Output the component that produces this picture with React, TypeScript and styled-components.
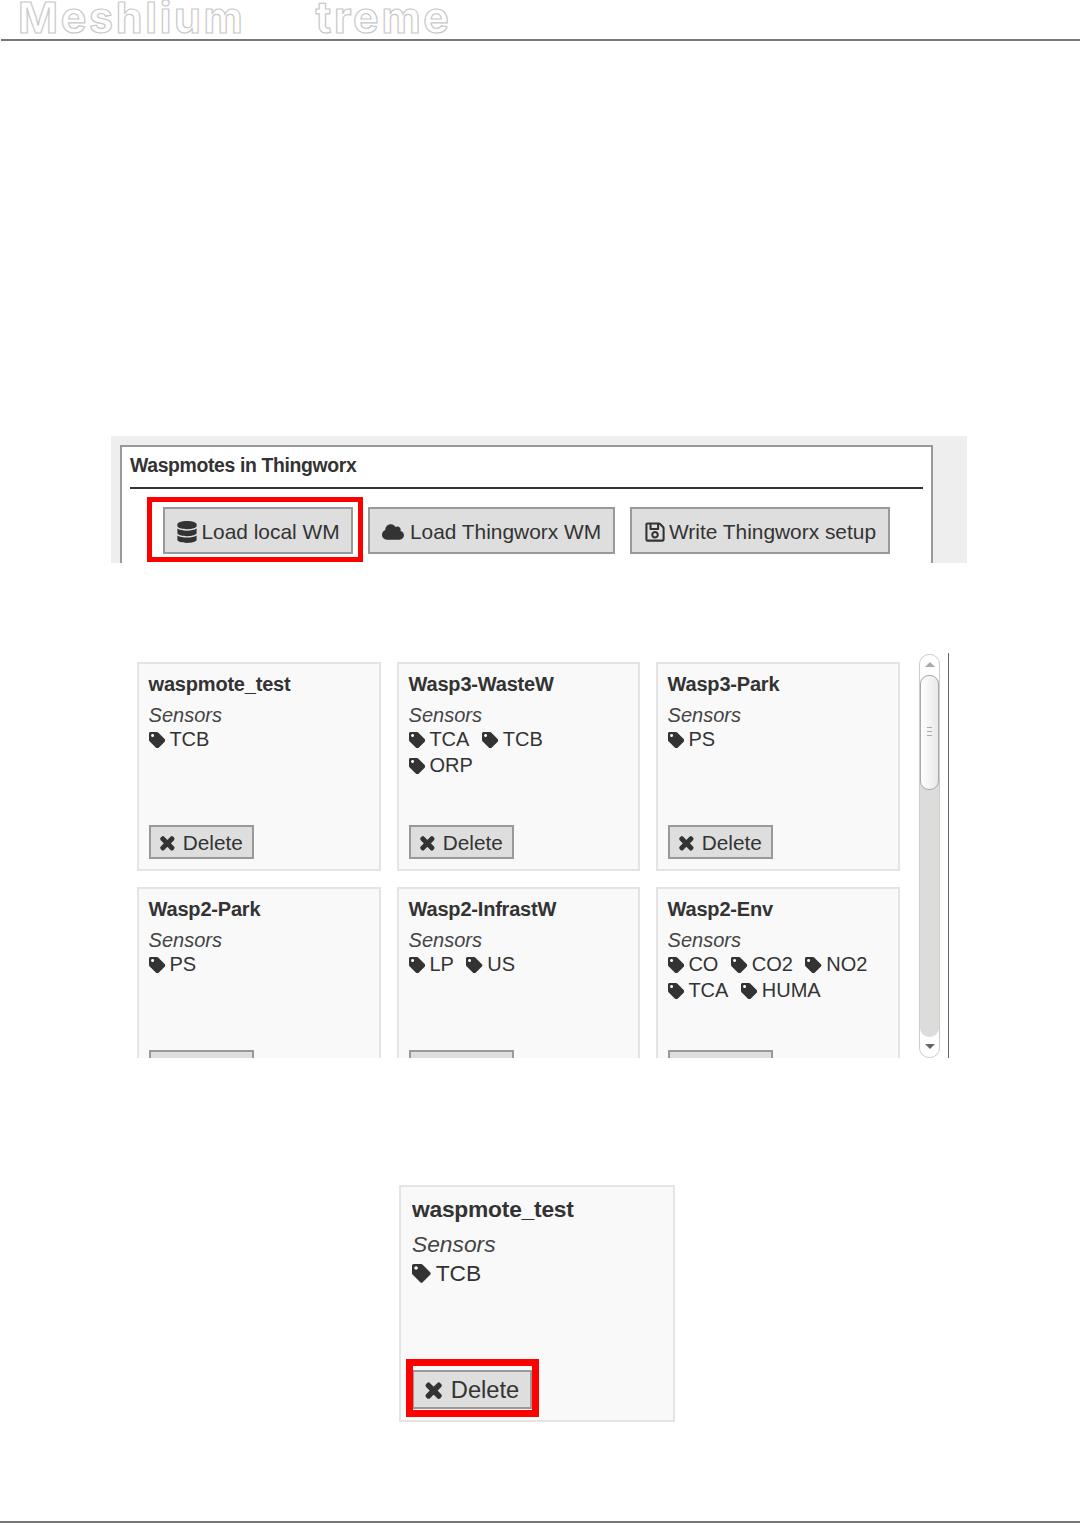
import React, { FC } from 'react';
import styled, { createGlobalStyle } from 'styled-components';
import { FaCloud, FaDatabase, FaRegSave, FaTag, FaTimes } from 'react-icons/fa';

const GlobalStyle = createGlobalStyle`
    html, body {
        margin: 0;
        background: #fff;
        font-family: 'Liberation Sans', Arial, sans-serif;
        color: #333;
    }
`;

const Page = styled.div`
    width: 1080px;
    height: 1523px;
    overflow: hidden;
    display: flex;
    flex-direction: column;
    align-items: flex-start;
`;

const Header = styled.header`
    width: 1079px;
    margin-left: 1px;
    height: 41px;
    box-sizing: border-box;
    border-bottom: 2px solid #777;
    padding-left: 17px;
    display: flex;
    gap: 70px;
    overflow: hidden;
`;

const Logo = styled.span`
    font-family: Inter, sans-serif;
    font-size: 43px;
    font-weight: 700;
    line-height: 34px;
    letter-spacing: 2.7px;
    color: #fff;
    -webkit-text-stroke: 1.2px #c8c8c8;
`;

const PanelShot = styled.section`
    width: 856px;
    height: 127px;
    margin: 395px 0 0 111px;
    padding: 9px 34px 0 9px;
    box-sizing: border-box;
    background: #eee;
    overflow: hidden;
`;

const Panel = styled.div`
    height: 130px;
    box-sizing: border-box;
    padding: 0 8px;
    background: #fff;
    border: 2px solid #999;
`;

const PanelTitle = styled.h2`
    margin: 0;
    height: 42px;
    box-sizing: border-box;
    line-height: 36px;
    font-size: 19.4px;
    font-weight: bold;
    letter-spacing: -0.35px;
    border-bottom: 2px solid #333;
`;

const Toolbar = styled.div`
    display: flex;
    gap: 15px;
    padding: 18px 0 0 33px;
`;

const Highlight = styled.span<{ $inset: string; $thick: number }>`
    position: relative;
    display: inline-flex;
    &::after {
        content: '';
        position: absolute;
        inset: ${(p) => p.$inset};
        border: ${(p) => p.$thick}px solid #f00;
    }
`;

const Button = styled.button<{ $width: number; $gap: number }>`
    display: inline-flex;
    align-items: center;
    justify-content: center;
    gap: ${(p) => p.$gap}px;
    width: ${(p) => p.$width}px;
    height: 47px;
    padding: 3px 0 0;
    box-sizing: border-box;
    background: #dedede;
    border: 2px solid #999;
    color: #333;
    font-family: inherit;
    font-size: 20.9px;
`;

const ListShot = styled.section`
    width: 812px;
    height: 406px;
    margin: 90px 0 0 137px;
    box-sizing: border-box;
    border-right: 1px solid #666;
    display: flex;
    overflow: hidden;
`;

const CardGrid = styled.div`
    display: grid;
    grid-template-columns: 244px 243px 244px;
    grid-auto-rows: 209px;
    gap: 16px;
    padding-top: 9px;
`;

const Card = styled.article<{ $big?: boolean }>`
    display: flex;
    flex-direction: column;
    align-items: flex-start;
    box-sizing: border-box;
    width: ${(p) => (p.$big ? '276px' : 'auto')};
    height: ${(p) => (p.$big ? '237px' : '209px')};
    padding: 0.4em 0.48em 0.5em;
    background: #f9f9f9;
    border: 2px solid #e4e4e4;
    font-size: ${(p) => (p.$big ? '22.8px' : '20px')};
`;

const CardTitle = styled.h3`
    margin: 0;
    font-size: 1em;
    font-weight: bold;
    line-height: 1.2em;
    letter-spacing: -0.01em;
`;

const SensorsLabel = styled.em`
    margin-top: 0.35em;
    line-height: 1.2em;
    color: #444;
`;

const TagRow = styled.div`
    display: flex;
    gap: 0.63em;
    height: 1.3em;
    align-items: center;
`;

const Tag = styled.span`
    display: inline-flex;
    align-items: center;
    gap: 0.22em;
    svg {
        font-size: 0.82em;
    }
`;

const DeleteButton = styled.button`
    display: inline-flex;
    align-items: center;
    justify-content: center;
    gap: 0.42em;
    width: 5.05em;
    height: 1.62em;
    padding: 2px 0 0 2px;
    box-sizing: border-box;
    background: #dedede;
    border: 2px solid #999;
    color: #333;
    font-family: inherit;
    font-size: 1.04em;
    svg {
        font-size: 0.9em;
        margin: 0 -0.16em;
        stroke: currentColor;
        stroke-width: 40;
    }
`;

const Push = styled.div`
    margin-top: auto;
    display: flex;
`;

const Scrollbar = styled.div`
    width: 21px;
    height: 404px;
    margin: 1px 0 0 19px;
    box-sizing: border-box;
    border: 1px solid #ccc;
    border-radius: 10px;
    background: #fff;
    display: flex;
    flex-direction: column;
    align-items: center;
    flex: none;
`;

const ScrollArrow = styled.div<{ $down?: boolean }>`
    flex: none;
    height: 20px;
    display: flex;
    align-items: center;
    justify-content: center;
    &::before {
        content: '';
        border-left: 5px solid transparent;
        border-right: 5px solid transparent;
        ${(p) => (p.$down ? 'border-top' : 'border-bottom')}: 5px solid ${(p) => (p.$down ? '#666' : '#aaa')};
    }
`;

const ScrollTrack = styled.div`
    flex: 1;
    width: 19px;
    background: #dcdcda;
    border-radius: 9px;
`;

const ScrollThumb = styled.div`
    width: 19px;
    height: 115px;
    box-sizing: border-box;
    border: 1px solid #aaa;
    border-radius: 9px;
    background: linear-gradient(to right, #fff, #e8e8e8);
    display: flex;
    align-items: center;
    justify-content: center;
`;

const Grip = styled.div`
    width: 5px;
    height: 11px;
    background: repeating-linear-gradient(to bottom, #aaa 0 1px, transparent 1px 4px);
`;

const DetailShot = styled.section`
    margin: 127px 0 0 399px;
`;

const Footer = styled.footer`
    width: 1080px;
    margin-top: 99px;
    border-top: 2px solid #777;
`;

interface SensorCard {
    name: string;
    rows: string[][];
}

const cards: SensorCard[] = [
    { name: 'waspmote_test', rows: [['TCB']] },
    { name: 'Wasp3-WasteW', rows: [['TCA', 'TCB'], ['ORP']] },
    { name: 'Wasp3-Park', rows: [['PS']] },
    { name: 'Wasp2-Park', rows: [['PS']] },
    { name: 'Wasp2-InfrastW', rows: [['LP', 'US']] },
    { name: 'Wasp2-Env', rows: [['CO', 'CO2', 'NO2'], ['TCA', 'HUMA']] },
];

const CardBody: FC<SensorCard> = ({ name, rows }) => (
    <>
        <CardTitle>{name}</CardTitle>
        <SensorsLabel>Sensors</SensorsLabel>
        {rows.map((row) => (
            <TagRow key={row.join()}>
                {row.map((tag) => (
                    <Tag key={tag}>
                        <FaTag />
                        {tag}
                    </Tag>
                ))}
            </TagRow>
        ))}
    </>
);

const DeleteBtn = () => (
    <DeleteButton>
        <FaTimes />
        Delete
    </DeleteButton>
);

export default function App() {
    return (
        <Page>
            <GlobalStyle />
            <Header>
                <Logo>Meshlium</Logo>
                <Logo>treme</Logo>
            </Header>

            <PanelShot>
                <Panel>
                    <PanelTitle>Waspmotes in Thingworx</PanelTitle>
                    <Toolbar>
                        <Highlight $inset="-10px -10px -8px -16px" $thick={5}>
                            <Button $width={190} $gap={3}>
                                <FaDatabase size={22} />
                                Load local WM
                            </Button>
                        </Highlight>
                        <Button $width={247} $gap={6}>
                            <FaCloud size={22} />
                            Load Thingworx WM
                        </Button>
                        <Button $width={260} $gap={3}>
                            <FaRegSave size={22} />
                            Write Thingworx setup
                        </Button>
                    </Toolbar>
                </Panel>
            </PanelShot>

            <ListShot>
                <CardGrid>
                    {cards.map((card) => (
                        <Card key={card.name}>
                            <CardBody {...card} />
                            <Push>
                                <DeleteBtn />
                            </Push>
                        </Card>
                    ))}
                </CardGrid>
                <Scrollbar>
                    <ScrollArrow />
                    <ScrollTrack>
                        <ScrollThumb>
                            <Grip />
                        </ScrollThumb>
                    </ScrollTrack>
                    <ScrollArrow $down />
                </Scrollbar>
            </ListShot>

            <DetailShot>
                <Card $big>
                    <CardBody {...cards[0]} />
                    <Push>
                        <Highlight $inset="-11px -7px -8px -6px" $thick={7}>
                            <DeleteBtn />
                        </Highlight>
                    </Push>
                </Card>
            </DetailShot>

            <Footer />
        </Page>
    );
}
